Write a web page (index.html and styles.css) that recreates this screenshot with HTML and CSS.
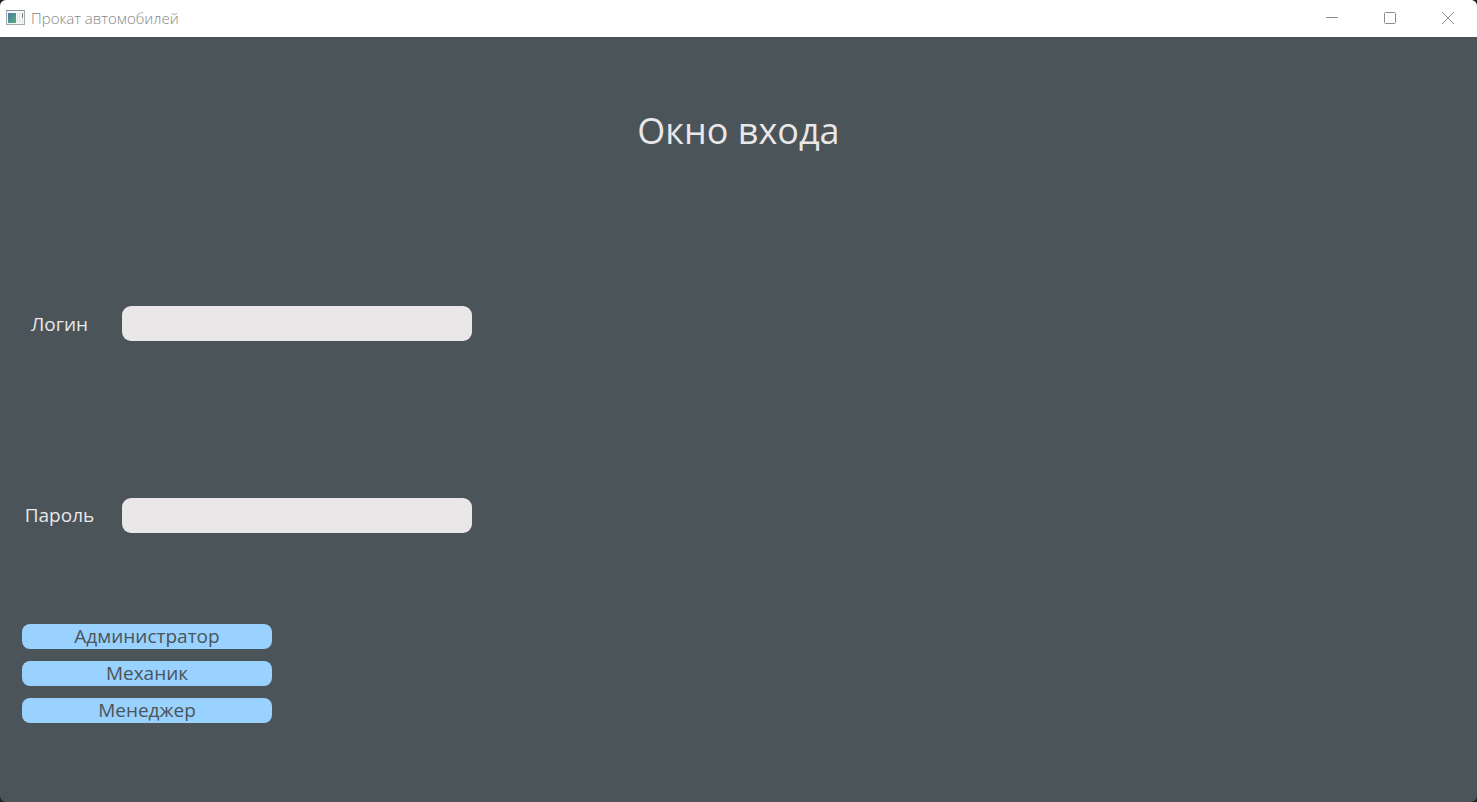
FILE: index.html
```html
<!DOCTYPE html>
<html lang="ru">
<head>
<meta charset="utf-8">
<title>Прокат автомобилей</title>
<link rel="stylesheet" href="styles.css">
</head>
<body>
<div class="window">
  <header class="titlebar">
    <svg class="app-icon" width="20" height="16" viewBox="0 0 20 16" aria-hidden="true">
      <defs>
        <linearGradient id="pane" x1="0" y1="0" x2="1" y2="1">
          <stop offset="0" stop-color="#4a7ba6"/>
          <stop offset="1" stop-color="#55ad7c"/>
        </linearGradient>
      </defs>
      <rect x="0.5" y="0.5" width="18" height="14" fill="#f4f6f6" stroke="#a3a9ad"/>
      <path d="M0 0.5H19" stroke="#8c9499"/>
      <rect x="2" y="3" width="8" height="10" fill="url(#pane)"/>
      <path d="M11.5 3V13M13.5 3V13" stroke="#e2e7e7"/>
      <path d="M16.5 3V8" stroke="#78858a"/>
      <path d="M16.5 9V13" stroke="#dfe4e4"/>
    </svg>
    <span class="caption">Прокат автомобилей</span>
    <div class="controls">
      <button class="control" type="button" aria-label="Свернуть">
        <svg width="14" height="14" viewBox="0 0 14 14"><path d="M1 6.5H13"/></svg>
      </button>
      <button class="control" type="button" aria-label="Развернуть">
        <svg width="14" height="14" viewBox="0 0 14 14"><rect x="1.5" y="1.5" width="11" height="11" rx="1"/></svg>
      </button>
      <button class="control" type="button" aria-label="Закрыть">
        <svg width="14" height="14" viewBox="0 0 14 14"><path d="M1 1L13 13M13 1L1 13"/></svg>
      </button>
    </div>
  </header>
  <main class="content">
    <h1 class="heading">Окно входа</h1>
    <div class="field">
      <label class="label" for="login">Логин</label>
      <input class="input" id="login" type="text">
    </div>
    <div class="field">
      <label class="label" for="password">Пароль</label>
      <input class="input" id="password" type="password">
    </div>
    <div class="roles">
      <button class="role" type="button">Администратор</button>
      <button class="role" type="button">Механик</button>
      <button class="role" type="button">Менеджер</button>
    </div>
  </main>
</div>
</body>
</html>
```
FILE: styles.css
```css
* {
  box-sizing: border-box;
}

body {
  margin: 0;
  background: #1c1e1f;
  font-family: "Open Sans", "Noto Sans", sans-serif;
}

.window {
  display: flex;
  flex-direction: column;
  min-height: 100vh;
  border-radius: 6px;
  overflow: hidden;
  background: #4b5459;
}

.titlebar {
  display: flex;
  align-items: center;
  height: 37px;
  padding: 0 0 2px 6px;
  background: #fff;
}

.caption {
  margin-left: 5px;
  color: #868686;
  font-size: 15px;
  font-weight: 300;
  line-height: 20px;
}

.controls {
  display: flex;
  align-self: stretch;
  margin-left: auto;
}

.control {
  display: flex;
  align-items: center;
  justify-content: center;
  width: 58px;
  padding: 0;
  border: 0;
  background: none;
}

.control svg {
  fill: none;
  stroke: #8c8c8c;
}

.content {
  flex: 1;
  display: grid;
  grid-template-rows: repeat(4, 1fr);
}

.heading {
  margin: 0;
  padding-bottom: 4px;
  align-self: center;
  color: #e9e7e8;
  font-size: 36px;
  font-weight: 400;
  line-height: 50px;
  text-align: center;
}

.field {
  display: flex;
  align-items: center;
}

.label {
  width: 119px;
  color: #e9e7e8;
  font-size: 19px;
  line-height: 26px;
  text-align: center;
}

.input {
  width: 350px;
  height: 35px;
  margin-left: 3px;
  padding: 0 10px;
  border: 0;
  border-radius: 9px;
  background: #e9e7e8;
  color: #4b5459;
  font: inherit;
  font-size: 19px;
}

.roles {
  display: flex;
  flex-direction: column;
  gap: 12px;
  padding: 13px 22px;
}

.role {
  width: 250px;
  height: 25px;
  padding: 0;
  border: 0;
  border-radius: 8px;
  background: #99d1ff;
  color: #4b5459;
  font: inherit;
  font-size: 19px;
  line-height: 25px;
}
```
